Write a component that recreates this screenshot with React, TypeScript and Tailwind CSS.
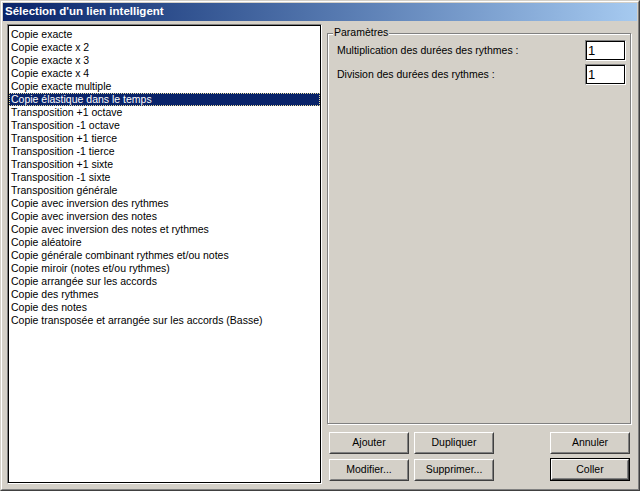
import React from "react";

const items = [
  "Copie exacte",
  "Copie exacte x 2",
  "Copie exacte x 3",
  "Copie exacte x 4",
  "Copie exacte multiple",
  "Copie élastique dans le temps",
  "Transposition +1 octave",
  "Transposition -1 octave",
  "Transposition +1 tierce",
  "Transposition -1 tierce",
  "Transposition +1 sixte",
  "Transposition -1 sixte",
  "Transposition générale",
  "Copie avec inversion des rythmes",
  "Copie avec inversion des notes",
  "Copie avec inversion des notes et rythmes",
  "Copie aléatoire",
  "Copie générale combinant rythmes et/ou notes",
  "Copie miroir (notes et/ou rythmes)",
  "Copie arrangée sur les accords",
  "Copie des rythmes",
  "Copie des notes",
  "Copie transposée et arrangée sur les accords (Basse)",
];

function Btn({ label, def }: { label: string; def?: boolean }) {
  const inner = (
    <div className="flex h-full w-full items-center justify-center border border-t-white border-l-white border-r-[#404040] border-b-[#404040] bg-[#d4d0c8]">
      <div className="flex h-full w-full items-center justify-center border border-t-[#d4d0c8] border-l-[#d4d0c8] border-r-[#808080] border-b-[#808080]">
        {label}
      </div>
    </div>
  );
  if (def) {
    return <div className="h-[23px] w-[80px] border border-black">{inner}</div>;
  }
  return <div className="h-[22px] w-[80px]">{inner}</div>;
}

function Field() {
  return (
    <div className="h-[21px] w-[41px] border border-t-[#808080] border-l-[#808080] border-r-white border-b-white">
      <div className="h-full w-full border border-black bg-white pl-[1px] leading-[17px] text-[13px]">1</div>
    </div>
  );
}

export default function App() {
  return (
    <div
      className="h-[491px] w-[640px] border border-t-[#d4d0c8] border-l-[#d4d0c8] border-r-[#404040] border-b-[#404040] bg-[#d4d0c8] text-[10.5px] text-black"
      style={{ fontFamily: '"Liberation Sans", Arial, sans-serif' }}
    >
      <div className="flex h-full w-full flex-col border border-t-white border-l-white border-r-[#808080] border-b-[#808080] p-[1px]">
        <div className="flex h-[18px] items-center bg-gradient-to-r from-[#0a246a] to-[#a6caf0] pl-[2px] text-[11.5px] font-bold text-white">
          Sélection d'un lien intelligent
        </div>
        <div className="flex flex-1 pl-[4px] pt-[3px]">
          <div className="h-[460px] w-[315px] border border-t-[#808080] border-l-[#808080] border-r-white border-b-white">
            <div className="h-full w-full border border-black bg-white pt-[2px]">
              {items.map((it, i) =>
                i === 5 ? (
                  <div
                    key={i}
                    className="h-[13px] whitespace-nowrap bg-[#0a246a] pl-[2px] leading-[13px] text-white outline-1 outline-dotted outline-offset-[-1px] outline-[#e8dc9c]"
                  >
                    {it}
                  </div>
                ) : (
                  <div key={i} className="h-[13px] whitespace-nowrap pl-[2px] leading-[13px]">
                    {it}
                  </div>
                )
              )}
            </div>
          </div>
          <div className="ml-[5px] flex w-[305px] flex-col pt-[9px]">
            <div className="relative h-[391px] w-[304px] border border-[#808080] shadow-[inset_1px_1px_0_#fff,1px_1px_0_#fff]">
              <span className="absolute left-[5px] top-[-8px] bg-[#d4d0c8] px-[1px] leading-[13px]">Paramètres</span>
              <div className="flex flex-col gap-[3px] pl-[9px] pr-[4px] pt-[6px]">
                <div className="flex items-center justify-between">
                  <span>Multiplication des durées des rythmes :</span>
                  <Field />
                </div>
                <div className="flex items-center justify-between">
                  <span>Division des durées des rythmes :</span>
                  <Field />
                </div>
              </div>
            </div>
            <div className="mt-[8px] flex flex-col gap-[5px] pl-[2px]">
              <div className="flex items-center">
                <Btn label="Ajouter" />
                <div className="ml-[5px]">
                  <Btn label="Dupliquer" />
                </div>
                <div className="ml-[56px]">
                  <Btn label="Annuler" />
                </div>
              </div>
              <div className="flex items-center">
                <Btn label="Modifier..." />
                <div className="ml-[5px]">
                  <Btn label="Supprimer..." />
                </div>
                <div className="ml-[56px] mt-[-1px]">
                  <Btn label="Coller" def />
                </div>
              </div>
            </div>
          </div>
        </div>
      </div>
    </div>
  );
}
